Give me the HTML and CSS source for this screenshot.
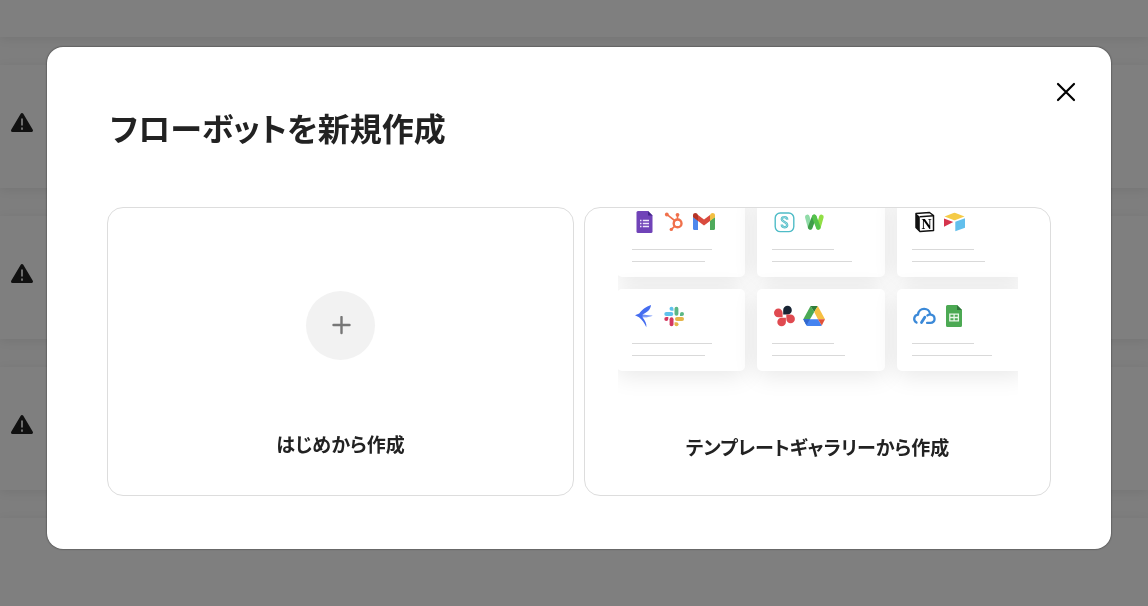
FILE: index.html
```html
<!DOCTYPE html>
<html lang="ja">
<head>
    <meta charset="UTF-8">
    <meta name="viewport" content="width=device-width, initial-scale=1.0">
    <title>フローボットを新規作成</title>
    <link rel="stylesheet" href="styles.css">
</head>
<body>
    <div class="page" aria-hidden="true">
        <div class="page-header"></div>
        <div class="page-row">
            <svg class="warning" viewBox="0 0 24 24"><path d="M12 3.500 21.500 19.500H2.500Z" fill="#222" stroke="#222" stroke-width="3" stroke-linejoin="round"/><path d="M12 7.500v7M12 16.500v2.200" stroke="#ddd" stroke-width="2"/></svg>
        </div>
        <div class="page-row">
            <svg class="warning" viewBox="0 0 24 24"><path d="M12 3.500 21.500 19.500H2.500Z" fill="#222" stroke="#222" stroke-width="3" stroke-linejoin="round"/><path d="M12 7.500v7M12 16.500v2.200" stroke="#ddd" stroke-width="2"/></svg>
        </div>
        <div class="page-row">
            <svg class="warning" viewBox="0 0 24 24"><path d="M12 3.500 21.500 19.500H2.500Z" fill="#222" stroke="#222" stroke-width="3" stroke-linejoin="round"/><path d="M12 7.500v7M12 16.500v2.200" stroke="#ddd" stroke-width="2"/></svg>
        </div>
        <div class="page-rest"></div>
    </div>

    <div class="overlay">
        <div class="modal" role="dialog" aria-modal="true" aria-labelledby="modal-title">
            <button type="button" class="close" aria-label="閉じる">
                <svg viewBox="0 0 20 20" fill="none" stroke="#000" stroke-width="2.200" stroke-linecap="round"><path d="M2 2 18 18M18 2 2 18"/></svg>
            </button>
            <h1 id="modal-title">フローボットを新規作成</h1>

            <div class="choices">
                <button type="button" class="choice choice-blank">
                    <span class="plus">
                        <svg viewBox="0 0 20 20" fill="none" stroke="#777" stroke-width="2.400" stroke-linecap="round"><path d="M10.500 1v16M2.500 9h16"/></svg>
                    </span>
                    <span class="choice-label">はじめから作成</span>
                </button>

                <button type="button" class="choice">
                    <span class="preview">
                        <span class="tiles">
                            <span class="tile">
                                <span class="icons">
                                    <!-- forms -->
                                    <svg viewBox="0 0 24 24"><path d="M6 1h10l4.500 4.500V21.500a1.500 1.500 0 0 1-1.500 1.500H6a1.500 1.500 0 0 1-1.500-1.500v-19A1.500 1.500 0 0 1 6 1Z" fill="#7043b8"/><path d="M16 1v4.500h4.500Z" fill="#42258a"/><path d="M8 10.500h1.500M8 13.500h1.500M8 16.500h1.500M10.800 10.500H17M10.800 13.500H17M10.800 16.500H17" stroke="#eee6fa" stroke-width="1.300"/></svg>
                                    <!-- hubspot -->
                                    <svg viewBox="0 0 24 24" fill="none" stroke="#f0714c"><circle cx="15.600" cy="13.400" r="3.900" stroke-width="2.400"/><path d="M4.800 4.400 12.600 10.500M15.500 5v5M12.800 16.200 9.400 19.400" stroke-width="1.600"/><g fill="#f0714c" stroke="none"><circle cx="4.800" cy="4.500" r="1.900"/><circle cx="15.500" cy="4.800" r="1.900"/><circle cx="9.300" cy="19.400" r="1.700"/></g></svg>
                                    <!-- gmail -->
                                    <svg viewBox="0 0 24 24"><path d="M1 7v11.500A1.500 1.500 0 0 0 2.500 20H6V10.500Z" fill="#4e88ed"/><path d="M18 10.500V20h3.500a1.500 1.500 0 0 0 1.500-1.500V7Z" fill="#4faa5b"/><path d="M18 4.900V11l5-3.800V5.500c0-2.500-2.500-3-4-1.900Z" fill="#f2bf42"/><path d="M6 4.900V11L1 7.200V5.500c0-2.500 2.500-3 4-1.900Z" fill="#b53427"/><path d="M6 4.900v6l6 4.600 6-4.600v-6l-6 4.600Z" fill="#d94b3e"/></svg>
                                </span>
                                <span class="line long"></span>
                                <span class="line medium"></span>
                            </span>
                            <span class="tile">
                                <span class="icons">
                                    <svg viewBox="0 0 24 24" fill="none" stroke="#4fbcc7"><rect x="3.200" y="3" width="18.600" height="18.600" rx="5" stroke-width="1.400"/><path d="M15.200 9.700c0-3.400-5.400-3.400-5.400-.5 0 3 5.400 2.700 5.400 5.700 0 3.200-5.400 3.200-5.400-.3" stroke-width="2.400"/><path d="M15.200 9.700c0-3.400-5.400-3.400-5.400-.5 0 3 5.400 2.700 5.400 5.700 0 3.200-5.400 3.200-5.400-.3" stroke="#fff" stroke-width=".4"/></svg>
                                    <svg viewBox="0 0 24 24" fill="none" stroke-width="4.600" stroke-linecap="round"><path d="m19.400 6.900-3 10.500" stroke="#91df45"/><path d="m5.300 6.900 2.800 10.500" stroke="#90dba8"/><path d="m12.200 6.900-4 10.500" stroke="#3f9e49"/><path d="m12.300 6.900 4 10.500" stroke="#55c34b"/></svg>
                                </span>
                                <span class="line short"></span>
                                <span class="line long"></span>
                            </span>
                            <span class="tile">
                                <span class="icons">
                                    <!-- notion -->
                                    <svg viewBox="0 0 24 24"><path d="M4 3.500 17.500 2.500l4 3v15L8 21.500 4 17.500Z" fill="#fff" stroke="#111" stroke-width="1.500" stroke-linejoin="round"/><path d="M4 3.500 7.800 6.700V21.500L4 17.500Z" fill="#111"/><path d="M7.800 6.700 21.500 5.700" stroke="#111" stroke-width="1.500"/><text x="14.600" y="18.600" text-anchor="middle" class="notion-n">N</text></svg>
                                    <!-- airtable -->
                                    <svg viewBox="0 0 24 24"><path d="m2.500 6.500 9-3.600a3 3 0 0 1 2 0l9 3.600-9 3.600a3 3 0 0 1-2 0Z" fill="#f5cb46"/><path d="M13.300 11.800 23 8.200v9.500l-9.700 3.500Z" fill="#62bfec"/><path d="M2 8.500 11.300 12 2 16.800Z" fill="#d5344c"/></svg>
                                </span>
                                <span class="line short"></span>
                                <span class="line medium"></span>
                            </span>
                            <span class="tile">
                                <span class="icons">
                                    <svg viewBox="0 0 24 24"><path d="M19 1C14 2.500 9.500 6 7.300 9.500L3 11.300 7 13.300C10 15.500 12.500 19 14.300 23.300 15 20 13 16.500 10.500 13.300H15L20.800 11.800 10.300 10.500C15 8.500 18.800 5.500 19 1Z" fill="#456df0"/><path d="m10.500 12.100 9-.1" stroke="#cdd9ff" stroke-width=".8"/></svg>
                                    <!-- slack -->
                                    <svg viewBox="0 0 24 24"><g fill="#60c2ec"><rect x="2.300" y="8" width="9" height="3.900" rx="1.950"/><path d="M9.500 2.700a2 2 0 0 1 2 2v2h-2a2 2 0 0 1 0-4Z"/></g><g fill="#5cb785"><rect x="12.500" y="2.700" width="3.900" height="9" rx="1.950"/><path d="M22 9.900a2 2 0 0 1-2 2h-2v-2a2 2 0 0 1 4 0Z"/></g><g fill="#e5b448"><rect x="13" y="13" width="9" height="3.900" rx="1.950"/><path d="M14.500 22.300a2 2 0 0 1-2-2v-2h2a2 2 0 0 1 0 4Z"/></g><g fill="#d43860"><rect x="7.600" y="13.200" width="3.900" height="9.100" rx="1.950"/><path d="M2.300 15a2 2 0 0 1 2-2h2v2a2 2 0 0 1-4 0Z"/></g></svg>
                                </span>
                                <span class="line long"></span>
                                <span class="line medium"></span>
                            </span>
                            <span class="tile">
                                <span class="icons">
                                    <svg viewBox="0 0 24 24"><path d="M11.200 10.400V6A4.300 4.300 0 1 1 15.500 10.400Z" fill="#182434"/><g fill="#e04a50"><path d="M10.600 13.200H6.300A4.300 4.300 0 1 1 10.600 9Z"/><path d="M13.900 18.300V18a4.300 4.300 0 1 1-4.300-4.300h4.300Z"/><path d="M14.300 10.600h4.300a4.300 4.300 0 1 1-4.300 4.300Z"/></g></svg>
                                    <!-- drive -->
                                    <svg viewBox="0 0 24 24"><path d="M8.500 2 1.300 15.200l3.200 6L12.200 8Z" fill="#4baa55"/><path d="M8.500 2h7.300l-3.600 6Z" fill="#2f7d3a"/><path d="M15.800 2 23 15.200h-7L12.200 8Z" fill="#f7bf42"/><path d="M1.300 15.200H16L19.800 21.500a1.500 1.500 0 0 1-1 .5H5.500a1.500 1.500 0 0 1-1.200-.8Z" fill="#4483f0"/><path d="M1.300 15.200h6.600l-3.400 6Z" fill="#3267cf"/><path d="M16 15.200h7l-3.200 6.300Z" fill="#e15138"/></svg>
                                </span>
                                <span class="line short"></span>
                                <span class="line medium"></span>
                            </span>
                            <span class="tile">
                                <span class="icons">
                                    <svg viewBox="0 0 24 24" fill="none" stroke="#3b89d8" stroke-width="2.300" stroke-linecap="round"><path d="M4.500 18.600C.8 16.500 1.800 11.200 6 10.600 6.600 3.200 17.300 2.700 18.200 10.300c5.800.8 5.800 8.600.1 8.600h-3.200M18.200 10.300c-1.300 0-2 .3-2.800 1.200"/><path d="M12.800 13.300 9.500 18.600" stroke-width="2.800"/></svg>
                                    <!-- sheets -->
                                    <svg viewBox="0 0 24 24"><path d="M5.500 1H15l5 5v15.500a1.500 1.500 0 0 1-1.500 1.500h-13A1.500 1.500 0 0 1 4 21.500v-19A1.500 1.500 0 0 1 5.500 1Z" fill="#4ca953"/><path d="M15 1v5h5Z" fill="#31763b"/><path d="M7.800 10.200h8.600v6.600H7.800ZM12.100 10.200v6.600M7.800 13.500h8.600" fill="none" stroke="#e8f6e8" stroke-width="1.300"/></svg>
                                </span>
                                <span class="line short"></span>
                                <span class="line long"></span>
                            </span>
                        </span>
                    </span>
                    <span class="choice-label">テンプレートギャラリーから作成</span>
                </button>
            </div>
        </div>
    </div>
</body>
</html>
```
FILE: styles.css
```css
* {
    box-sizing: border-box;
}
body {
    margin: 0;
    height: 100vh;
    overflow: hidden;
    background-color: #fff;
    color: #222;
    font-family: "Noto Sans CJK JP", sans-serif;
    font-feature-settings: "palt";
}
.page {
    display: flex;
    flex-direction: column;
    gap: 28px;
    height: 100vh;
    background-color: #fcfcfc;
}
.page-header, .page-row, .page-rest {
    background-color: #fff;
    box-shadow: 0 2px 10px rgba(0, 0, 0, 0.08);
}
.page-header {
    height: 37px;
}
.page-row {
    display: flex;
    align-items: center;
    height: 123px;
    padding: 0 10px 8px;
}
.page-rest {
    flex: 1;
}
.warning {
    width: 24px;
    height: 24px;
}
.overlay {
    position: fixed;
    inset: 0;
    padding: 47px 37px 57px 47px;
    background-color: rgba(0, 0, 0, 0.5);
}
.modal {
    position: relative;
    padding: 58px 60px 53px;
    border-radius: 16px;
    background-color: #fff;
    box-shadow: 0 0 2px rgba(0, 0, 0, 0.7);
}
.close {
    position: absolute;
    top: 30px;
    right: 30px;
    display: flex;
    padding: 5px;
    border: none;
    background: none;
    cursor: pointer;
}
.close svg {
    width: 20px;
    height: 20px;
}
h1 {
    margin: 0 0 58px;
    padding-left: 3px;
    font-size: 32px;
    line-height: 44px;
    font-weight: 700;
}
.choices {
    display: grid;
    grid-template-columns: 1fr 1fr;
    gap: 10px;
}
.choice {
    display: flex;
    flex-direction: column;
    align-items: center;
    height: 289px;
    padding: 0;
    border: 1px solid #ddd;
    border-radius: 16px;
    background-color: #fff;
    color: inherit;
    font: inherit;
    font-feature-settings: inherit;
    overflow: hidden;
    cursor: pointer;
}
.choice-blank {
    padding-top: 83px;
    gap: 70px;
}
.choice-label {
    font-size: 19px;
    line-height: 28px;
    font-weight: 700;
}
.plus {
    display: flex;
    align-items: center;
    justify-content: center;
    width: 69px;
    height: 69px;
    border-radius: 50%;
    background-color: #f2f2f2;
}
.plus svg {
    width: 20px;
    height: 20px;
}
.preview {
    width: 400px;
    max-width: 100%;
    height: 192px;
    margin-bottom: 33px;
    overflow: hidden;
}
.tiles {
    display: grid;
    grid-template-columns: repeat(3, 128px);
    gap: 12px;
    margin: -13px 0 0 -1px;
}
.tile {
    display: flex;
    flex-direction: column;
    gap: 11px;
    height: 82px;
    padding: 15px;
    border-radius: 5px;
    background-color: #fff;
    box-shadow: 0 4px 24px rgba(0, 0, 0, 0.1);
}
.icons {
    display: flex;
    gap: 6px;
    margin-bottom: 4px;
}
.icons svg {
    width: 24px;
    height: 24px;
}
.line {
    height: 1px;
    background-color: #d9d9d9;
}
.long {
    width: 80px;
}
.medium {
    width: 73px;
}
.short {
    width: 62px;
}
.notion-n {
    font-family: "Liberation Serif", serif;
    font-size: 14px;
    font-weight: 700;
}
```
